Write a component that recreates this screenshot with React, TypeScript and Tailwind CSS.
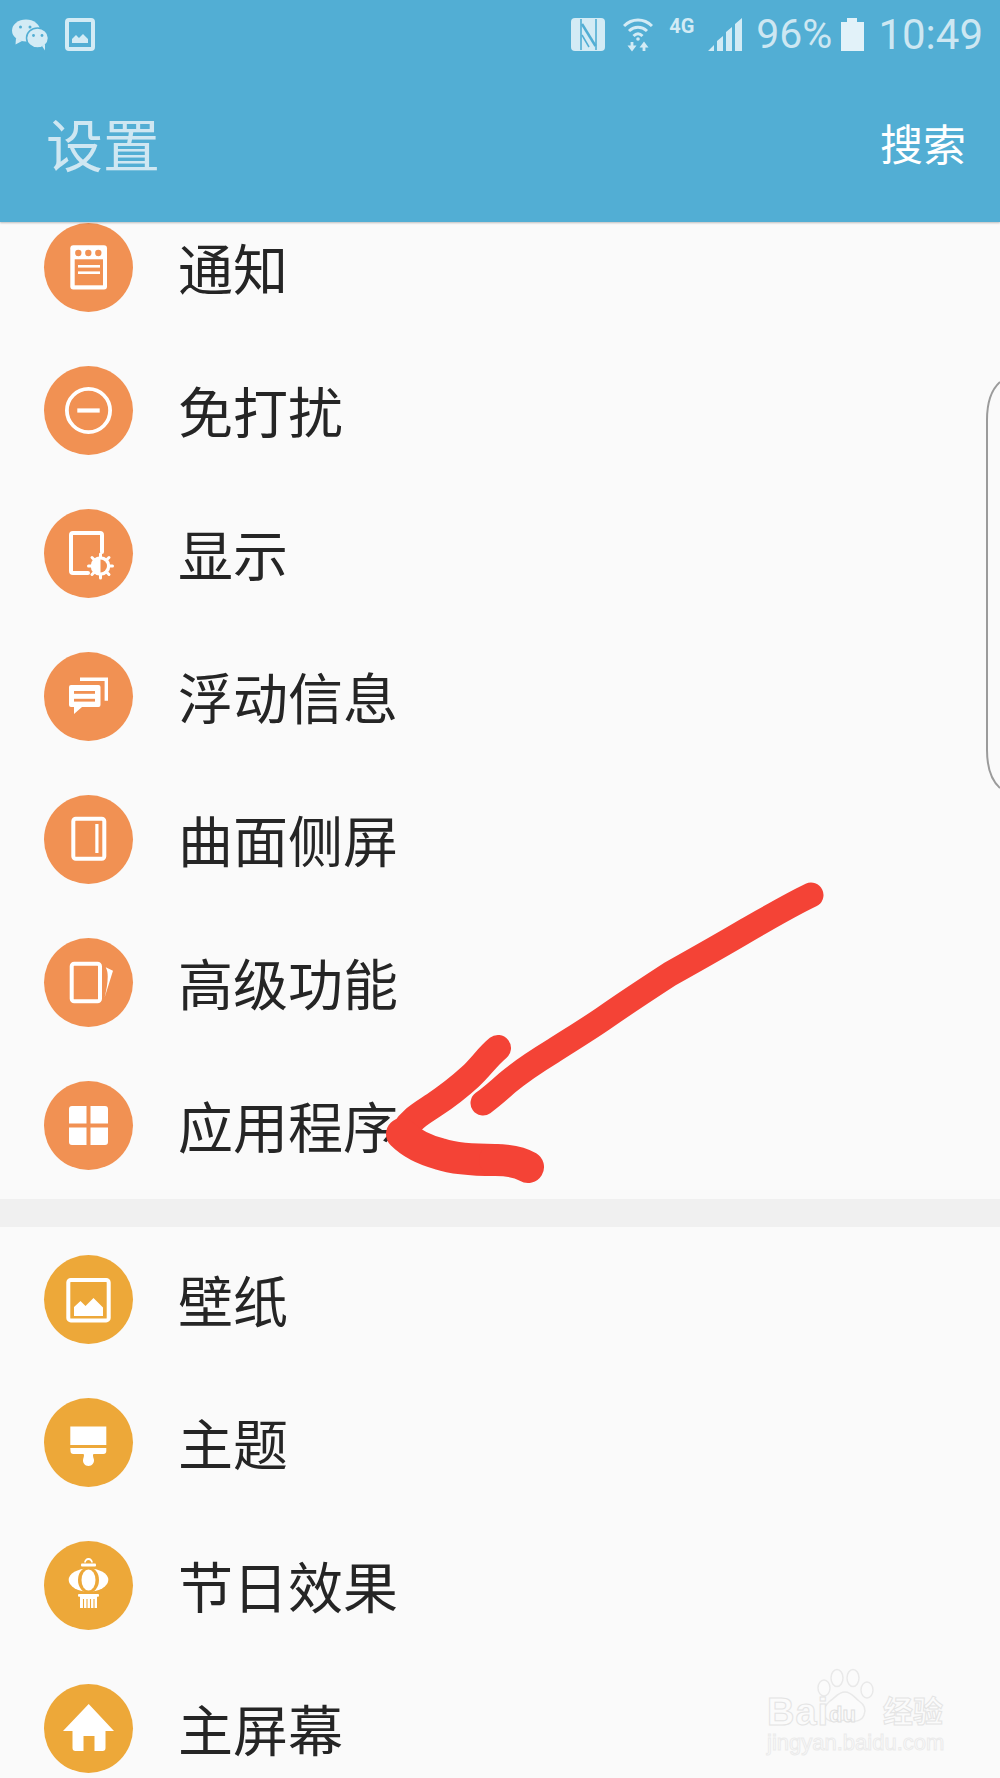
import React from "react";

const O = "#f19153";
const A = "#eda839";
const CJK = "font-['Noto_Sans_CJK_SC','Noto_Sans',sans-serif]";

const Svg = ({ children }: { children: React.ReactNode }) => (
  <svg viewBox="0 0 89 89" className="w-full h-full">{children}</svg>
);

const Notify = () => (
  <Svg>
    <rect x="26.3" y="22.3" width="36.7" height="44.3" rx="3" fill="#fff" />
    <rect x="30.7" y="36.3" width="28.3" height="26" fill={O} />
    <circle cx="34.3" cy="30" r="3.2" fill={O} />
    <circle cx="44.3" cy="30" r="3.2" fill={O} />
    <circle cx="54.3" cy="30" r="3.2" fill={O} />
    <rect x="34" y="42" width="22" height="2.6" fill="#fff" />
    <rect x="34" y="48.4" width="22" height="2.6" fill="#fff" />
  </Svg>
);
const Dnd = () => (
  <Svg>
    <circle cx="44.5" cy="44.5" r="21.6" fill="none" stroke="#fff" strokeWidth="3.8" />
    <rect x="33.3" y="42.4" width="22.4" height="4.2" fill="#fff" />
  </Svg>
);
const Display = () => (
  <Svg>
    <path d="M44 64H29a2 2 0 0 1-2-2V26a2 2 0 0 1 2-2h27a2 2 0 0 1 2 2v17" fill="none" stroke="#fff" strokeWidth="4" strokeLinecap="round" />
    <g stroke="#fff" strokeWidth="3" strokeLinecap="round">
      <path d="M56.5 45v24M44.500 57h24M48 48.500l17 17M65 48.500l-17 17" />
    </g>
    <circle cx="56.5" cy="57" r="9.800" fill="#fff" />
    <path d="M56.5 50.500a6.500 6.500 0 0 1 0 13z" fill={O} />
  </Svg>
);
const Message = () => (
  <Svg>
    <path d="M36 27.3h26.3v21.4" fill="none" stroke="#fff" strokeWidth="3.4" />
    <path d="M27 33h27.5a2 2 0 0 1 2 2v18a2 2 0 0 1-2 2H38l-8 7v-7h-3a2 2 0 0 1-2-2V35a2 2 0 0 1 2-2z" fill="#fff" />
    <rect x="30" y="39" width="21" height="2.8" fill={O} />
    <rect x="30" y="46.8" width="21" height="2.8" fill={O} />
  </Svg>
);
const Edge = () => (
  <Svg>
    <rect x="29.3" y="23.7" width="31" height="40" rx="2.5" fill="none" stroke="#fff" strokeWidth="4" />
    <rect x="51.3" y="29" width="3.2" height="29" fill="#fff" />
  </Svg>
);
const Advanced = () => (
  <Svg>
    <rect x="27.7" y="25.7" width="28.3" height="37.6" rx="2.5" fill="none" stroke="#fff" strokeWidth="4" />
    <path d="M61.7 29.3 69 32.7 60.7 59.3c1.8-8 3-14 3-20.5 0-3.500-.2-6-2-9.500z" fill="#fff" />
  </Svg>
);
const Apps = () => (
  <Svg>
    <path d="M25 42.5V28a3 3 0 0 1 3-3h14.5v17.5zM46.5 25H61a3 3 0 0 1 3 3v14.5H46.5zM25 46.5h17.5V64H28a3 3 0 0 1-3-3zM46.5 46.5H64V61a3 3 0 0 1-3 3H46.5z" fill="#fff" />
  </Svg>
);
const Wall = () => (
  <Svg>
    <rect x="24.3" y="25" width="40.4" height="40.4" rx="2.5" fill="none" stroke="#fff" strokeWidth="4" />
    <path d="M30 61v-9l6.5-6 5 5 8-8 9.500 9.500V61z" fill="#fff" />
  </Svg>
);
const Brush = () => (
  <Svg>
    <rect x="26.3" y="28.5" width="36" height="18.5" fill="#fff" />
    <path d="M26.3 50h36v3a3 3 0 0 1-3 3H50c-1.500 0-1 2.500-.2 5 1 3.500-1.700 7-5.300 7s-6.300-3.500-5.300-7c.8-2.500 1.300-5-.2-5h-9.500a3 3 0 0 1-3-3z" fill="#fff" />
  </Svg>
);
const Lantern = () => (
  <Svg>
    <path d="M41 21.500a3.500 3.500 0 0 1 7 0" fill="none" stroke="#fff" strokeWidth="1.800" />
    <rect x="37" y="22.500" width="15" height="3" rx="1" fill="#fff" />
    <ellipse cx="44.500" cy="39" rx="19.800" ry="11.500" fill="#fff" />
    <ellipse cx="44.500" cy="39" rx="10.500" ry="13" fill={A} />
    <ellipse cx="44.500" cy="39" rx="7" ry="10.500" fill="#fff" />
    <rect x="34" y="53" width="21" height="2.800" rx="1" fill="#fff" />
    <path d="M36 55h17v12H36z" fill="#fff" />
    <path d="M39.500 58v9M43 58v9M46.500 58v9M50 58v9" stroke={A} strokeWidth="1.100" />
  </Svg>
);
const Home = () => (
  <Svg>
    <path d="M44.700 20 70 47h-8.500v17a3 3 0 0 1-3 3h-8v-15h-11v15h-8a3 3 0 0 1-3-3V47H19z" fill="#fff" />
  </Svg>
);

const Row = ({ label, color, icon }: { label: string; color: string; icon: React.ReactNode }) => (
  <div className="h-[143px] flex items-center pl-[44px] gap-[45px] shrink-0">
    <div className="w-[89px] h-[89px] rounded-full shrink-0" style={{ backgroundColor: color }}>{icon}</div>
    <span className={`text-[55px] leading-none text-[#252525] -mt-[2px] ${CJK}`}>{label}</span>
  </div>
);

const group1: [string, React.ReactNode][] = [
  ["通知", <Notify />],
  ["免打扰", <Dnd />],
  ["显示", <Display />],
  ["浮动信息", <Message />],
  ["曲面侧屏", <Edge />],
  ["高级功能", <Advanced />],
  ["应用程序", <Apps />],
];
const group2: [string, React.ReactNode][] = [
  ["壁纸", <Wall />],
  ["主题", <Brush />],
  ["节日效果", <Lantern />],
  ["主屏幕", <Home />],
];

const ic = "#d3ebf5";
const hb = "#52aed4";

const StatusBar = () => (
  <div className="h-[68px] flex items-center pl-[12px] pr-[17px] pt-[1px]">
    <svg viewBox="0 0 36 32" className="w-[36px] h-[32px]">
      <ellipse cx="14" cy="11.500" rx="14" ry="11" fill={ic} />
      <path d="m4 19-.5 6.500L10 22z" fill={ic} />
      <ellipse cx="25.500" cy="19" rx="11" ry="10" fill={ic} stroke={hb} strokeWidth="1.500" />
      <path d="m30 27 3 4.500V25z" fill={ic} />
      <circle cx="8.500" cy="8" r="1.500" fill={hb} />
      <circle cx="18" cy="8" r="1.500" fill={hb} />
      <circle cx="21.500" cy="16.500" r="1.400" fill={hb} />
      <circle cx="30" cy="16.500" r="1.400" fill={hb} />
    </svg>
    <svg viewBox="0 0 30 33" className="w-[30px] h-[33px] ml-[17px]">
      <rect x="2" y="2" width="26" height="29" rx="2" fill="none" stroke={ic} strokeWidth="4" />
      <path d="M7 25v-4l4-4 3 3 4-4 5 5v4z" fill={ic} />
    </svg>
    <div className="flex-1" />
    <svg viewBox="0 0 34 33" className="w-[34px] h-[33px]">
      <rect width="34" height="33" rx="4" fill={ic} />
      <path d="M10 1v31M25 1v31" fill="none" stroke={hb} strokeWidth="1.600" />
      <path d="M11 6 24.500 28" fill="none" stroke={hb} strokeWidth="2.500" />
      <path d="M11 17 18 29" fill="none" stroke={hb} strokeWidth="1.500" />
    </svg>
    <svg viewBox="0 0 30 34" className="w-[30px] h-[34px] ml-[18px]" fill="none" stroke={ic} strokeWidth="3">
      <path d="M1 8C9 0 21 0 29 8" />
      <path d="M6 13c5.500-5 12.500-5 18 0" />
      <path d="M10.500 18c3-3 6-3 9 0" />
      <circle cx="15" cy="21" r="1.800" fill={ic} stroke="none" />
      <path d="M9 24v7M21 33v-7" strokeWidth="2.800" />
      <path d="M4.500 27.500 9 33.500l4.500-6zM16.500 29.500 21 23.500l4.500 6z" fill={ic} stroke="none" />
    </svg>
    <span className="font-['Roboto',sans-serif] font-bold text-[20px] leading-none ml-[16px] mb-[18px] w-[27px] text-[#d3ebf5]">4G</span>
    <svg viewBox="0 0 34 33" className="w-[34px] h-[33px] ml-[12px]" fill={ic}>
      <path d="M0 33 6 27v6zM9 33V23l6-5v15zM18 33V14l6-5v24zM27 33V6l7-6v33z" />
    </svg>
    <span className="font-['Roboto',sans-serif] text-[41px] leading-none text-[#cde7f2] ml-[14px]">96%</span>
    <svg viewBox="0 0 23 33" className="w-[23px] h-[33px] ml-[9px]" fill="#e2f2f9">
      <path d="M0 4h6V0h10v4h7v29H0z" />
    </svg>
    <span className="font-['Roboto',sans-serif] text-[42px] leading-none text-[#cde7f2] ml-[14px]">10:49</span>
  </div>
);

export default function App() {
  return (
    <div className="relative w-[1000px] h-[1778px] overflow-hidden bg-[#fafafa] flex flex-col">
      <header className="relative z-10 h-[222px] shrink-0 bg-[#52aed4] shadow-[0_1px_2px_rgba(0,0,0,0.25)]">
        <StatusBar />
        <div className="flex items-center justify-between pl-[46px] pr-[34px] h-[84px] mt-[32px]">
          <span className={`text-[57px] leading-none text-[#cfe7f2] ${CJK}`}>设置</span>
          <span className={`text-[43px] leading-none text-white ${CJK}`}>搜索</span>
        </div>
      </header>

      <main className="flex-1 overflow-hidden flex flex-col">
        <div className="-mt-[26px] flex flex-col">
          {group1.map(([l, i]) => (
            <Row key={l} label={l} color={O} icon={i} />
          ))}
        </div>
        <div className="h-[28px] shrink-0 bg-[#f0f0f0] mt-[2px]" />
        <div className="flex flex-col mt-[1px]">
          {group2.map(([l, i]) => (
            <Row key={l} label={l} color={A} icon={i} />
          ))}
        </div>
      </main>

      {/* edge panel handle */}
      <svg viewBox="0 0 14 410" className="absolute right-0 top-[380px] w-[14px] h-[410px]" fill="none">
        <path d="M14 2C5 10 1 22 1 40v330c0 18 4 30 13 38" stroke="#9b9b9b" strokeWidth="2" />
      </svg>

      {/* hand-drawn arrow */}
      <svg viewBox="0 0 1000 1778" className="absolute inset-0 w-[1000px] h-[1778px] pointer-events-none" fill="none" stroke="#f44336" strokeLinecap="round" strokeLinejoin="round">
        <path d="M811 895 C790 905 770 917 747 930 C720 946 695 960 670 974 C650 987 630 1000 607 1016 C590 1028 570 1040 553 1051 C535 1062 520 1072 507 1083 C497 1092 490 1098 483 1103" strokeWidth="25" />
        <path d="M498 1048 C488 1056 480 1068 470 1077 C458 1088 446 1097 434 1105 C422 1113 412 1118 402 1133" strokeWidth="26" />
        <path d="M402 1134 C412 1144 425 1150 440 1154 C455 1159 475 1160 495 1160" strokeWidth="32" />
        <path d="M495 1160 C505 1160 518 1161 528 1167" strokeWidth="32" />
      </svg>

      {/* watermark */}
      <div className="absolute left-[767px] top-[1668px] w-[190px] h-[92px] pointer-events-none">
        <svg viewBox="0 0 60 60" className="absolute left-[50px] top-0 w-[60px] h-[60px]" fill="#fbfbfb" stroke="#e9e9e9" strokeWidth="1.500">
          <ellipse cx="20" cy="10" rx="6" ry="8.500" />
          <ellipse cx="36" cy="10" rx="6" ry="8.500" />
          <ellipse cx="7" cy="20" rx="6" ry="8" />
          <ellipse cx="50" cy="22" rx="6" ry="8" />
          <path d="M28 24c6 0 9 5 14 9 6 4 7 9 5 14-2 6-9 7-14 6-4-1-8-1-12 0-6 1-12 0-14-6-1-6 1-10 6-14 5-3 8-9 15-9z" />
        </svg>
        <span className="absolute left-0 top-[25px] font-['Liberation_Sans',sans-serif] font-bold text-[38px] leading-none tracking-[1px] text-[#fbfbfb] [-webkit-text-stroke:1px_#e4e4e4]">Bai</span>
        <span className="absolute left-[62px] top-[36px] font-['Liberation_Sans',sans-serif] font-bold text-[22px] leading-none text-[#fbfbfb] [-webkit-text-stroke:1px_#e0e0e0]">du</span>
        <span className={`absolute left-[116px] top-[26px] font-bold text-[30px] leading-none text-[#fbfbfb] [-webkit-text-stroke:1px_#e4e4e4] ${CJK}`}>经验</span>
        <span className="absolute left-0 top-[64px] font-['Liberation_Sans',sans-serif] text-[22px] leading-none text-[#fbfbfb] [-webkit-text-stroke:1px_#ebebeb]">jingyan.baidu.com</span>
      </div>
    </div>
  );
}
